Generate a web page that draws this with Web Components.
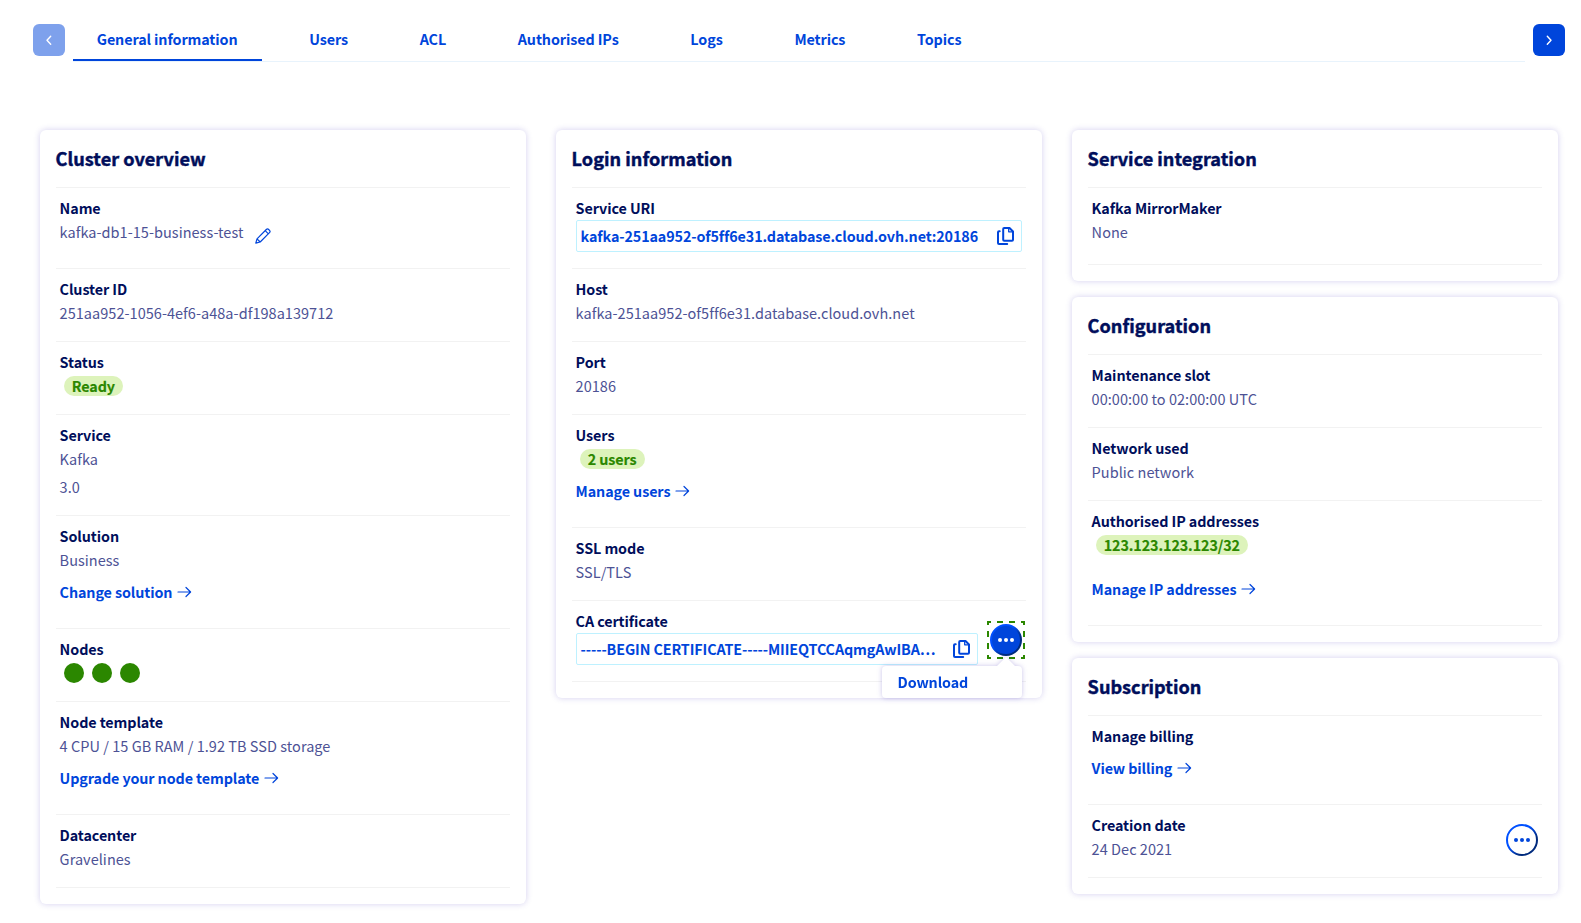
<!DOCTYPE html>
<html lang="en">
<head>
<meta charset="utf-8">
<title>Cluster – General information</title>
<style>
body { margin: 0; background: #fff; font-family: "Noto Sans CJK SC", "Open Sans", sans-serif; font-size: 14.33px; line-height: 24px; color: #4d5295; }
</style>
</head>
<body>
<db-page></db-page>
<script>
const define = (name, html, setup) => customElements.define(name, class extends HTMLElement {
  connectedCallback() {
    if (this.shadowRoot) return;
    const t = document.createElement('template');
    t.innerHTML = html;
    this.attachShadow({ mode: 'open' }).appendChild(t.content.cloneNode(true));
    if (setup) setup(this, this.shadowRoot);
  }
});

define('db-arrow-button', `
<style>
:host { display: block; flex: none; width: 32px; height: 32px; border-radius: 6px; background: #0045db; color: #fff; }
:host([disabled]) { opacity: .5; }
:host([dir-back]) svg { transform: scaleX(-1); }
svg { display: block; }
</style>
<svg width="32" height="32" viewBox="0 0 32 32" fill="none" stroke="currentColor" stroke-width="1.4" stroke-linecap="round" stroke-linejoin="round"><path d="M14.3 12.2 18 16.2l-3.7 4"/></svg>`);

define('db-tab', `
<style>
:host { display: block; box-sizing: border-box; height: 37px; padding: 3px 24px 0; color: #0045db; font-weight: 600; letter-spacing: -.095px; text-indent: -.3px; white-space: nowrap; }
:host([active]) { border-bottom: 2px solid #0045db; }
</style><slot></slot>`);

define('db-tabs', `
<style>
:host { display: flex; align-items: flex-start; gap: 8px; padding: 24px 16px 0 33px; }
nav { flex: 1; display: flex; gap: 24px; height: 37px; border-bottom: 1px solid #e8f3fc; }
</style>
<db-arrow-button dir-back disabled></db-arrow-button>
<nav><slot></slot></nav>
<db-arrow-button></db-arrow-button>`);

define('db-card', `
<style>
:host { display: block; padding: 16px; border-radius: 6px; background: #fff; box-shadow: 0 0 6px rgba(60, 40, 180, .22); }
h2 { margin: 0; height: 42px; border-bottom: 1px solid #f2f2f2; font-size: 18.1px; font-weight: 700; line-height: 24px; color: #000e5b; box-sizing: border-box; text-indent: -.4px; letter-spacing: .03px; -webkit-text-stroke: .45px #000e5b; }
</style>
<h2></h2><slot></slot>`, (el, root) => { root.querySelector('h2').textContent = el.getAttribute('heading'); });

define('db-item', `
<style>
:host { display: flex; align-items: center; border-bottom: 1px solid #f2f2f2; padding: 8px 4px 16px; }
.main { flex: 1; min-width: 0; }
.label { color: #000e5b; font-weight: 600; letter-spacing: -.09px; text-indent: -.4px; }
::slotted([slot=action]) { margin-left: 12px; }
</style>
<div class="main"><div class="label"></div><slot></slot></div><slot name="action"></slot>`,
(el, root) => { root.querySelector('.label').textContent = el.getAttribute('label'); });

define('db-value', `
<style>
:host { display: flex; height: 24px; gap: 12px; font-size: 14.5px; letter-spacing: .035px; text-indent: -.4px; }
:host([editable]) { height: 32px; }
:host([second]) { margin-top: 4px; }
svg { display: none; }
:host([editable]) svg { display: block; margin-top: 8px; }
</style>
<slot></slot>
<svg width="16" height="16" viewBox="0 0 16 16" fill="none" stroke="#0045db" stroke-width="1.2" stroke-linejoin="round"><path d="M.8 15.2 2 10.8 11.3 1.5a1.7 1.7 0 0 1 2.4 0l.8.8a1.7 1.7 0 0 1 0 2.4L5.2 14ZM2 10.8 5.2 14M10.2 2.6l3.2 3.2"/></svg>`);

define('db-badge', `
<style>
:host { display: block; height: 24px; }
span { display: inline-block; vertical-align: top; margin: 2px 0 0 4px; height: 20px; padding: 0 8px; border-radius: 10px; background: #ddf3bb; color: #2b8700; font-weight: 700; line-height: 20px; letter-spacing: -.09px; text-indent: -.3px; -webkit-text-stroke: .15px #2b8700; }
</style><span><slot></slot></span>`);

define('db-link', `
<style>
:host { display: flex; align-items: center; gap: 5px; padding: 8px 0; height: 24px; color: #0045db; font-weight: 600; letter-spacing: -.1px; text-indent: -.4px; }
:host([spaced]) { padding-top: 20px; }
</style><slot></slot>
<svg width="15" height="12" viewBox="0 0 15 12" fill="none" stroke="currentColor" stroke-width="1.2" stroke-linecap="round" stroke-linejoin="round"><path d="M1 6h12.5M9 1.5 13.6 6 9 10.5"/></svg>`);

define('db-nodes', `
<style>
:host { display: flex; gap: 8px; height: 24px; padding-left: 4px; align-items: center; }
i { width: 20px; height: 20px; border-radius: 50%; background: #2b8700; }
</style><i></i><i></i><i></i>`);

define('db-clipboard', `
<style>
:host { display: flex; box-sizing: border-box; height: 32px; border: 1px solid #bef1ff; border-radius: 2px; padding: 0 7px 0 4px; align-items: center; color: #0045db; font-weight: 600; letter-spacing: -.11px; text-indent: -.4px; }
span { flex: 1; min-width: 0; white-space: nowrap; }
svg { flex: none; margin-left: 12px; }
</style>
<span><slot></slot></span>
<svg width="17" height="18" viewBox="0 0 17 18" fill="none" stroke="currentColor" stroke-width="2" stroke-linejoin="round" stroke-linecap="round"><path d="M7.200 1H12.500L16 4.500V12.700a1 1 0 0 1-1 1H7.200a1 1 0 0 1-1-1V2a1 1 0 0 1 1-1Z"/><path d="M2.700 4.200H2a1 1 0 0 0-1 1V16a1 1 0 0 0 1 1h8.200"/><path d="M11.700 1.500v3.300H15.500" stroke-width="1.300"/></svg>`);

define('db-menu', `
<style>
:host { display: block; position: relative; flex: none; width: 32px; height: 32px; margin-top: 6px; }
svg { display: block; overflow: visible; }
.focus, .pop { display: none; }
:host([open]) .focus { display: block; }
:host([open]) .pop { display: block; position: absolute; z-index: 2; top: 42px; right: 0; width: 140px; height: 32px; box-sizing: border-box; padding: 4px 16px; border-radius: 4px; background: #fff; filter: drop-shadow(0 0 2.5px rgba(60, 40, 180, .28)); color: #0045db; font-weight: 600; letter-spacing: -.15px; text-indent: -.4px; }
.pop svg { position: absolute; top: -9px; right: 6px; }
:host([open]) .disc { fill: #0045db; }
:host([open]) .dots { fill: #fff; }
</style>
<div class="pop"><svg width="20" height="10" viewBox="0 0 20 10"><path d="M0 10 10 0 20 10Z" fill="#fff"/></svg><slot></slot></div>
<svg width="32" height="32" viewBox="0 0 32 32">
<defs><linearGradient id="ring" x1="0" y1="0" x2="1" y2="1"><stop offset=".4" stop-color="#0050ff"/><stop offset=".7" stop-color="#002a7d"/></linearGradient></defs>
<circle class="disc" cx="16" cy="16" r="15" fill="#fff" stroke="url(#ring)" stroke-width="2"/>
<g class="dots" fill="#0045db"><circle cx="10" cy="16" r="2"/><circle cx="16" cy="16" r="2"/><circle cx="22" cy="16" r="2"/></g>
<path class="focus" d="M-2-2H34V34H-2Z" fill="none" stroke="#2b8700" stroke-width="2" stroke-dasharray="6 6" stroke-dashoffset="3"/>
</svg>`);

define('db-page', `
<style>
:host { display: block; height: 923px; overflow: hidden; }
main { display: grid; grid-template-columns: repeat(3, 486px); gap: 30px; align-items: start; padding: 68px 0 0 40px; }
section { display: grid; grid-template-columns: minmax(0, 1fr); gap: 16px; }
</style>
<db-tabs><db-tab active>General information</db-tab><db-tab>Users</db-tab><db-tab>ACL</db-tab><db-tab>Authorised IPs</db-tab><db-tab>Logs</db-tab><db-tab>Metrics</db-tab><db-tab>Topics</db-tab></db-tabs>
<main>
<section>
<db-card heading="Cluster overview">
<db-item label="Name"><db-value editable>kafka-db1-15-business-test</db-value></db-item>
<db-item label="Cluster ID"><db-value>251aa952-1056-4ef6-a48a-df198a139712</db-value></db-item>
<db-item label="Status"><db-badge>Ready</db-badge></db-item>
<db-item label="Service"><db-value>Kafka</db-value><db-value second>3.0</db-value></db-item>
<db-item label="Solution"><db-value>Business</db-value><db-link>Change solution</db-link></db-item>
<db-item label="Nodes"><db-nodes></db-nodes></db-item>
<db-item label="Node template"><db-value>4 CPU / 15 GB RAM / 1.92 TB SSD storage</db-value><db-link>Upgrade your node template</db-link></db-item>
<db-item label="Datacenter"><db-value>Gravelines</db-value></db-item>
</db-card>
</section>
<section>
<db-card heading="Login information">
<db-item label="Service URI"><db-clipboard>kafka-251aa952-of5ff6e31.database.cloud.ovh.net:20186</db-clipboard></db-item>
<db-item label="Host"><db-value>kafka-251aa952-of5ff6e31.database.cloud.ovh.net</db-value></db-item>
<db-item label="Port"><db-value>20186</db-value></db-item>
<db-item label="Users"><db-badge>2 users</db-badge><db-link>Manage users</db-link></db-item>
<db-item label="SSL mode"><db-value>SSL/TLS</db-value></db-item>
<db-item label="CA certificate"><db-clipboard>-----BEGIN CERTIFICATE-----MIIEQTCCAqmgAwIBA…</db-clipboard><db-menu slot="action" open>Download</db-menu></db-item>
</db-card>
</section>
<section>
<db-card heading="Service integration">
<db-item label="Kafka MirrorMaker" style="padding-bottom:20px"><db-value>None</db-value></db-item>
</db-card>
<db-card heading="Configuration">
<db-item label="Maintenance slot"><db-value>00:00:00 to 02:00:00 UTC</db-value></db-item>
<db-item label="Network used"><db-value>Public network</db-value></db-item>
<db-item label="Authorised IP addresses"><db-badge>123.123.123.123/32</db-badge><db-link spaced>Manage IP addresses</db-link></db-item>
</db-card>
<db-card heading="Subscription">
<db-item label="Manage billing"><db-link>View billing</db-link></db-item>
<db-item label="Creation date"><db-value>24 Dec 2021</db-value><db-menu slot="action"></db-menu></db-item>
</db-card>
</section>
</main>`);
</script>
</body>
</html>
